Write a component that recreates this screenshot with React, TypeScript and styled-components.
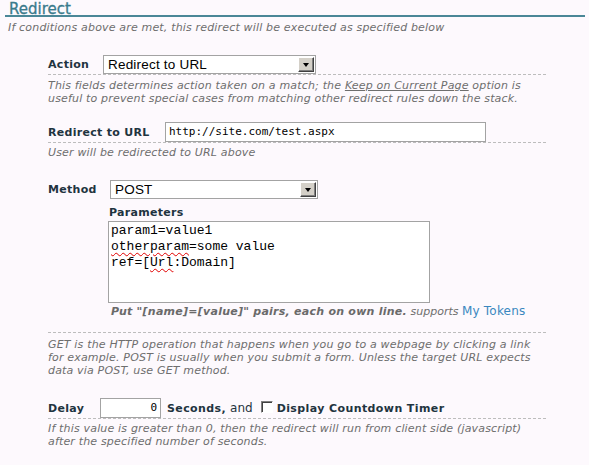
import React from "react";
import styled, { createGlobalStyle } from "styled-components";

const Global = createGlobalStyle`
  html, body { margin: 0; padding: 0; background: #fdf9fd; }
  body { font-family: "DejaVu Sans", Verdana, sans-serif; color: #1f3440; }
`;

const Page = styled.div`
  padding: 0 4px 0 5px;
  width: 580px;
`;

const Title = styled.h2`
  margin: 0;
  padding: 1px 0 0 4px;
  height: 14px;
  line-height: 17px;
  font-size: 15px;
  font-weight: normal;
  color: #3a7b8c;
  border-bottom: 2px solid #4a8797;
  -webkit-text-stroke: 0.3px #3a7b8c;
  overflow: visible;
`;

const Help = styled.div<{ $mt?: number; $ml?: number }>`
  margin-top: ${(p) => p.$mt ?? 4}px;
  margin-left: ${(p) => p.$ml ?? 0}px;
  font-size: 11px;
  letter-spacing: 0.17px;
  line-height: 13px;
  font-style: italic;
  color: #6e6e6e;
  white-space: nowrap;
`;

const Form = styled.div`
  margin: 21px 0 0 43px;
  width: 498px;
`;

const Row = styled.div<{ $mt: number; $dashed?: boolean }>`
  margin-top: ${(p) => p.$mt}px;
  display: flex;
  align-items: center;
  ${(p) => (p.$dashed === false ? "" : "border-bottom: 1px dashed #bdbdbd;")}
`;

const Label = styled.div<{ $w: number }>`
  width: ${(p) => p.$w}px;
  flex: none;
  font-size: 11px;
  letter-spacing: 0.3px;
  font-weight: bold;
  color: #1f3440;
  line-height: 13px;
`;

const SelectBox = styled.div<{ $w: number }>`
  width: ${(p) => p.$w}px;
  height: 19px;
  box-sizing: border-box;
  border: 1px solid #a3a3a3;
  background: #fff;
  display: flex;
  align-items: stretch;
  padding: 1px;
`;

const SelectValue = styled.div`
  flex: 1;
  font-family: "Liberation Sans", Arial, sans-serif;
  font-size: 13.5px;
  letter-spacing: 0.2px;
  line-height: 15px;
  color: #000;
  padding-left: 3px;
  white-space: nowrap;
`;

const DropButton = styled.div`
  width: 16px;
  box-sizing: border-box;
  background: #d4d0c8;
  border-top: 1px solid #fff;
  border-left: 1px solid #fff;
  border-right: 1px solid #404040;
  border-bottom: 1px solid #404040;
  box-shadow: inset -1px -1px 0 #808080;
  display: flex;
  align-items: center;
  justify-content: center;
  &::after {
    content: "";
    border-left: 3px solid transparent;
    border-right: 3px solid transparent;
    border-top: 4px solid #000;
    margin-top: 1px;
  }
`;

const TextInput = styled.div<{ $w: number; $right?: boolean }>`
  width: ${(p) => p.$w}px;
  height: 20px;
  box-sizing: border-box;
  border: 1px solid #a3a3a3;
  background: #fff;
  font-family: "DejaVu Sans Mono", "Liberation Mono", monospace;
  font-size: 11px;
  line-height: 18px;
  color: #000;
  padding: 0 3px;
  text-align: ${(p) => (p.$right ? "right" : "left")};
  flex: none;
`;

const MethodBlock = styled.div`
  margin-top: 21px;
  border-bottom: 1px dashed #bdbdbd;
  padding-bottom: 14px;
`;

const Params = styled.div`
  margin: 7px 0 0 60px;
`;

const SubLabel = styled.div`
  font-size: 11px;
  letter-spacing: 0.3px;
  font-weight: bold;
  line-height: 13px;
  color: #1f3440;
  margin-left: 1px;
`;

const ParamsBox = styled.div`
  margin-top: 2px;
  width: 322px;
  height: 82px;
  box-sizing: border-box;
  border: 1px solid #a3a3a3;
  background: #fff;
  padding: 1px 2px;
  font-family: "Liberation Mono", "Courier New", monospace;
  font-size: 13px;
  line-height: 16px;
  color: #000;
`;

const ParamLine = styled.div`
  white-space: pre;
`;

const Misspelled = styled.span`
  text-decoration: underline wavy #e00000;
  text-decoration-thickness: 1px;
  text-underline-offset: 2px;
`;

const PairsHint = styled.div`
  margin: 2px 0 0 3px;
  font-size: 11px;
  line-height: 13px;
  font-style: italic;
  color: #6e6e6e;
  white-space: nowrap;
`;

const Strong = styled.b`
  color: #6a6a6a;
  letter-spacing: 0.25px;
`;

const TokenLink = styled.a`
  font-style: normal;
  font-size: 12px;
  letter-spacing: 0.2px;
  color: #3a88bf;
  text-decoration: none;
`;

const Underlined = styled.span`
  text-decoration: underline;
`;

const Inline = styled.span<{ $bold?: boolean }>`
  font-size: ${(p) => (p.$bold ? 11 : 12)}px;
  font-weight: ${(p) => (p.$bold ? "bold" : "normal")};
  letter-spacing: ${(p) => (p.$bold ? 0.4 : 0)}px;
  color: #1f3440;
  line-height: 13px;
  white-space: nowrap;
`;

const Checkbox = styled.span`
  display: inline-block;
  width: 12px;
  height: 12px;
  box-sizing: border-box;
  background: #fff;
  border-top: 1px solid #808080;
  border-left: 1px solid #808080;
  border-right: 1px solid #fff;
  border-bottom: 1px solid #fff;
  box-shadow: inset 1px 1px 0 #404040;
  margin: 0 4px 2px 0;
  flex: none;
`;

const DelayRest = styled.div`
  display: flex;
  align-items: center;
  margin-left: 6px;
`;

const Gap = styled.span<{ $w: number }>`
  display: inline-block;
  width: ${(p) => p.$w}px;
`;

export default function App() {
  return (
    <Page>
      <Global />
      <Title>Redirect</Title>
      <Help $mt={4} $ml={3}>
        If conditions above are met, this redirect will be executed as specified below
      </Help>
      <Form>
        <Row $mt={0}>
          <Label $w={55}>Action</Label>
          <SelectBox $w={213}>
            <SelectValue>Redirect to URL</SelectValue>
            <DropButton />
          </SelectBox>
        </Row>
        <Help>
          This fields determines action taken on a match; the <Underlined>Keep on Current Page</Underlined> option is
          <br />
          useful to prevent special cases from matching other redirect rules down the stack.
        </Help>

        <Row $mt={17}>
          <Label $w={117}>Redirect to URL</Label>
          <TextInput $w={321}>http://site.com/test.aspx</TextInput>
        </Row>
        <Help $mt={3}>User will be redirected to URL above</Help>

        <MethodBlock>
          <Row $mt={0} $dashed={false}>
            <Label $w={62}>Method</Label>
            <SelectBox $w={208}>
              <SelectValue>POST</SelectValue>
              <DropButton />
            </SelectBox>
          </Row>
          <Params>
            <SubLabel>Parameters</SubLabel>
            <ParamsBox>
              <ParamLine>param1=value1</ParamLine>
              <ParamLine>
                <Misspelled>otherparam</Misspelled>=some value
              </ParamLine>
              <ParamLine>
                ref=[<Misspelled>Url</Misspelled>:Domain]
              </ParamLine>
            </ParamsBox>
            <PairsHint>
              <Strong>Put "[name]=[value]" pairs, each on own line.</Strong> supports{" "}
              <TokenLink href="#">My Tokens</TokenLink>
            </PairsHint>
          </Params>
        </MethodBlock>
        <Help $mt={5}>
          GET is the HTTP operation that happens when you go to a webpage by clicking a link
          <br />
          for example. POST is usually when you submit a form. Unless the target URL expects
          <br />
          data via POST, use GET method.
        </Help>

        <Row $mt={21}>
          <Label $w={52}>Delay</Label>
          <TextInput $w={61} $right>0</TextInput>
          <DelayRest>
            <Inline $bold>Seconds,</Inline>
            <Gap $w={4} />
            <Inline>and</Inline>
            <Gap $w={8} />
            <Checkbox />
            <Inline $bold>Display Countdown Timer</Inline>
          </DelayRest>
        </Row>
        <Help $mt={3}>
          If this value is greater than 0, then the redirect will run from client side (javascript)
          <br />
          after the specified number of seconds.
        </Help>
      </Form>
    </Page>
  );
}
